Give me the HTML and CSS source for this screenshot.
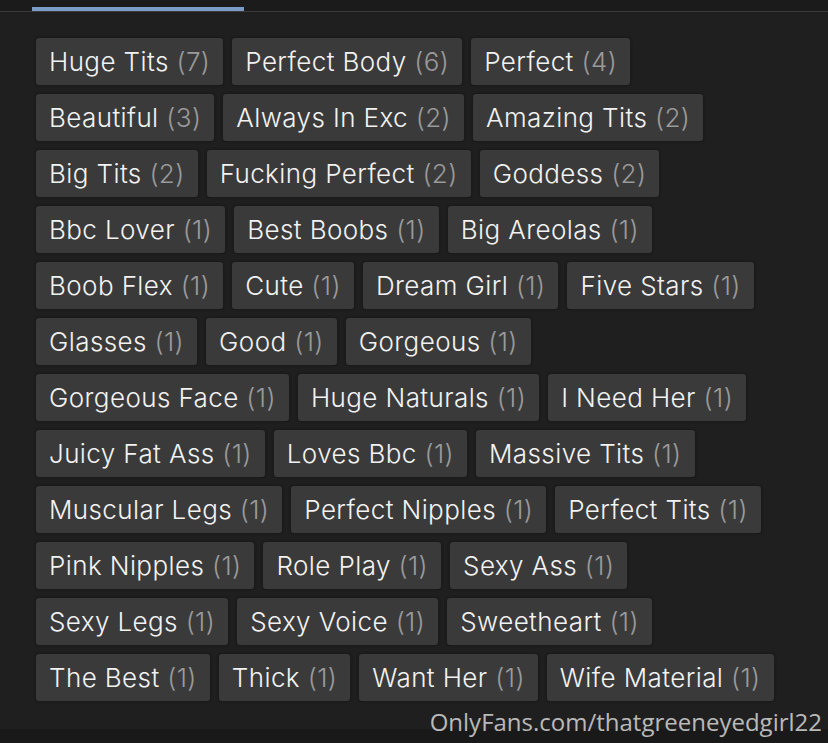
FILE: index.html
```html
<!DOCTYPE html>
<html lang="en">
<head>
  <meta charset="UTF-8" />
  <meta name="viewport" content="width=device-width, initial-scale=1" />
  <title>Tags</title>
  <link rel="stylesheet" href="styles.css">
</head>
<body>
  <div class="tabs">
    <div class="tab active"></div>
  </div>

  <div class="tags">
    <div class="row">
      <span class="tag">Huge Tits <em>(7)</em></span>
      <span class="tag">Perfect Body <em>(6)</em></span>
      <span class="tag">Perfect <em>(4)</em></span>
    </div>
    <div class="row">
      <span class="tag">Beautiful <em>(3)</em></span>
      <span class="tag">Always In Exc <em>(2)</em></span>
      <span class="tag">Amazing Tits <em>(2)</em></span>
    </div>
    <div class="row">
      <span class="tag">Big Tits <em>(2)</em></span>
      <span class="tag">Fucking Perfect <em>(2)</em></span>
      <span class="tag">Goddess <em>(2)</em></span>
    </div>
    <div class="row">
      <span class="tag">Bbc Lover <em>(1)</em></span>
      <span class="tag">Best Boobs <em>(1)</em></span>
      <span class="tag">Big Areolas <em>(1)</em></span>
    </div>
    <div class="row">
      <span class="tag">Boob Flex <em>(1)</em></span>
      <span class="tag">Cute <em>(1)</em></span>
      <span class="tag">Dream Girl <em>(1)</em></span>
      <span class="tag">Five Stars <em>(1)</em></span>
    </div>
    <div class="row">
      <span class="tag">Glasses <em>(1)</em></span>
      <span class="tag">Good <em>(1)</em></span>
      <span class="tag">Gorgeous <em>(1)</em></span>
    </div>
    <div class="row">
      <span class="tag">Gorgeous Face <em>(1)</em></span>
      <span class="tag">Huge Naturals <em>(1)</em></span>
      <span class="tag">I Need Her <em>(1)</em></span>
    </div>
    <div class="row">
      <span class="tag">Juicy Fat Ass <em>(1)</em></span>
      <span class="tag">Loves Bbc <em>(1)</em></span>
      <span class="tag">Massive Tits <em>(1)</em></span>
    </div>
    <div class="row">
      <span class="tag">Muscular Legs <em>(1)</em></span>
      <span class="tag">Perfect Nipples <em>(1)</em></span>
      <span class="tag">Perfect Tits <em>(1)</em></span>
    </div>
    <div class="row">
      <span class="tag">Pink Nipples <em>(1)</em></span>
      <span class="tag">Role Play <em>(1)</em></span>
      <span class="tag">Sexy Ass <em>(1)</em></span>
    </div>
    <div class="row">
      <span class="tag">Sexy Legs <em>(1)</em></span>
      <span class="tag">Sexy Voice <em>(1)</em></span>
      <span class="tag">Sweetheart <em>(1)</em></span>
    </div>
    <div class="row">
      <span class="tag">The Best <em>(1)</em></span>
      <span class="tag">Thick <em>(1)</em></span>
      <span class="tag">Want Her <em>(1)</em></span>
      <span class="tag">Wife Material <em>(1)</em></span>
    </div>
  </div>

  <div class="footer"></div>
  <div class="credit">OnlyFans.com/thatgreeneyedgirl22</div>
</body>
</html>
```

FILE: styles.css
```css
body {
  margin: 0;
  background: #1f1f1f;
  font-family: Inter, "Noto Sans", sans-serif;
  color: #f2f2f2;
  height: 743px;
  overflow: hidden;
  position: relative;
}
.tabs {
  height: 4px;
  padding: 7px 0 0 32px;
  background: #1b1b1b;
  border-bottom: 1px solid #3b3b3b;
}
.tab {
  width: 212px;
  height: 4px;
}
.tab.active {
  background: #7a9cc6;
}
.tags {
  padding: 26px 0 0 36px;
  display: flex;
  flex-direction: column;
  gap: 9px;
}
.row {
  display: flex;
  gap: 9px;
}
.tag {
  background: #3a3a3a;
  border-radius: 3px;
  height: 47px;
  line-height: 47px;
  padding: 0 13px;
  font-size: 26px;
  font-weight: 300;
  letter-spacing: 0.4px;
  white-space: nowrap;
  box-shadow: 0 0 3px #141414;
}
.tag em {
  font-style: normal;
  color: #9a9a9a;
}
.footer {
  position: absolute;
  left: 0;
  right: 0;
  top: 729px;
  height: 14px;
  background: #191919;
}
.credit {
  position: absolute;
  right: 6px;
  top: 705px;
  font-family: "Open Sans", sans-serif;
  font-size: 24px;
  color: rgba(230, 230, 230, 0.78);
}
```
